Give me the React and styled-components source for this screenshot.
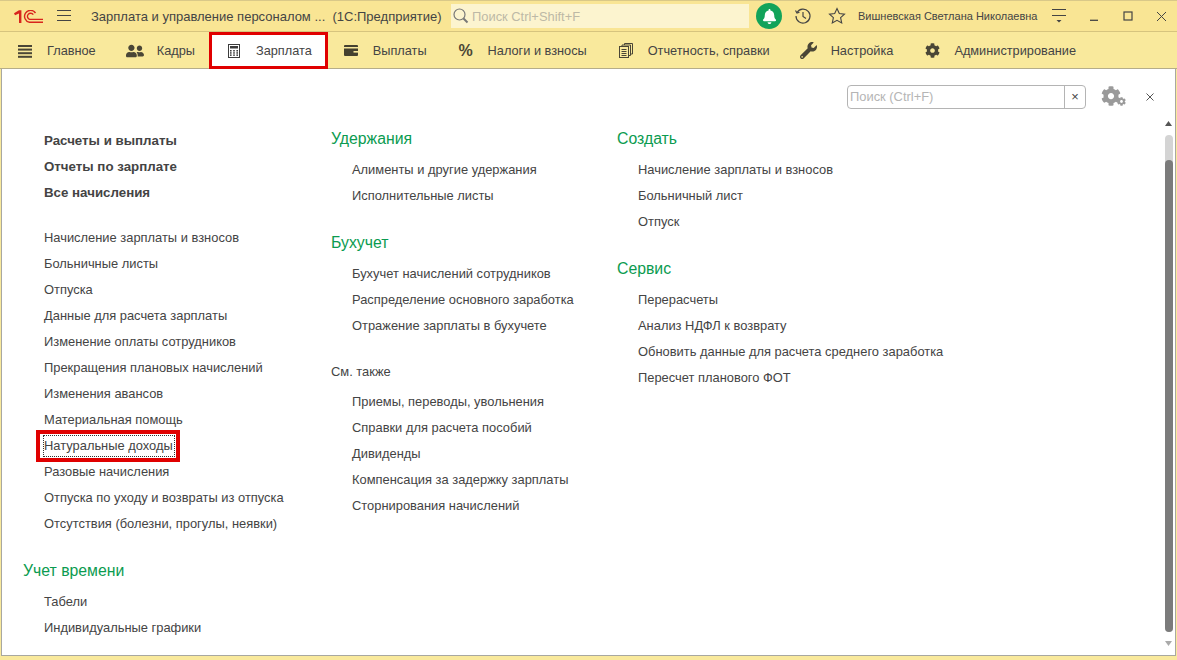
import React from "react";
import styled, { createGlobalStyle } from "styled-components";
import { FaUserFriends, FaWrench, FaCog, FaBell } from "react-icons/fa";

const tabs = [
  { label: "Главное", icon: <BurgerIcon /> },
  { label: "Кадры", icon: <FaUserFriends size={18} /> },
  { label: "Зарплата", icon: <CalcIcon />, active: true },
  { label: "Выплаты", icon: <CardIcon /> },
  { label: "Налоги и взносы", icon: <PercentIcon /> },
  { label: "Отчетность, справки", icon: <DocsIcon /> },
  { label: "Настройка", icon: <FaWrench size={17} /> },
  { label: "Администрирование", icon: <FaCog size={15} /> },
];

const mainLinks = [
  "Начисление зарплаты и взносов",
  "Больничные листы",
  "Отпуска",
  "Данные для расчета зарплаты",
  "Изменение оплаты сотрудников",
  "Прекращения плановых начислений",
  "Изменения авансов",
  "Материальная помощь",
  "Натуральные доходы",
  "Разовые начисления",
  "Отпуска по уходу и возвраты из отпуска",
  "Отсутствия (болезни, прогулы, неявки)",
];

function PercentIcon() {
  return <Percent>%</Percent>;
}

function BurgerIcon() {
  return (
    <svg width="14" height="14" viewBox="0 0 14 14" fill="#4a4636">
      <rect y="1" width="14" height="2" />
      <rect y="4.6" width="14" height="2" />
      <rect y="8.2" width="14" height="2" />
      <rect y="11.8" width="14" height="2" />
    </svg>
  );
}

function CalcIcon() {
  return (
    <svg width="12" height="14" viewBox="0 0 12 14">
      <rect x="0.5" y="0.5" width="11" height="13" fill="none" stroke="#3c3c3c" />
      <rect x="2" y="2" width="8" height="2.5" fill="#3c3c3c" />
      {[2, 5.2, 8.4].map(x =>
        [6, 8.2, 10.4].map(y => <rect key={`${x}-${y}`} x={x} y={y} width="1.6" height="1.5" fill="#3c3c3c" />)
      )}
    </svg>
  );
}

function CardIcon() {
  return (
    <svg width="14" height="11" viewBox="0 0 14 11" fill="#45412f">
      <path d="M1 0h12a1 1 0 0 1 1 1v1H0V1a1 1 0 0 1 1-1z" />
      <path d="M0 3.500h14V10a1 1 0 0 1-1 1H1a1 1 0 0 1-1-1z" />
      <rect x="9.500" y="6" width="4.500" height="1.600" fill="#f9e99c" />
    </svg>
  );
}

function DocsIcon() {
  return (
    <svg width="14" height="15" viewBox="0 0 14 15" fill="none" stroke="#4a4636">
      <rect x="0.5" y="3.5" width="9" height="11" />
      <path d="M3 3.500V2h8.500v10.500h-2M5.500 2V.500h8V11h-2" />
      <path d="M2.500 6.500h5M2.500 8.500h5M2.500 10.500h5M2.500 12.500h5" />
    </svg>
  );
}

const App = () => (
  <Window>
    <GlobalStyle />
    <TitleBar>
      <Logo viewBox="0 0 29 13" width="29" height="13">
        <path d="M0 3.200 5 .3h2.400V13H5V3.600L1 5.300z" fill="#d8251d" />
        <path d="M21.500 3A6 6 0 1 0 15.500 12.300H29M19.300 4.600A3.200 3.200 0 1 0 15.500 9.400H29" fill="none" stroke="#d8251d" strokeWidth="1.400" />
      </Logo>
      <MenuLines viewBox="0 0 14 12" width="14" height="12">
        <path d="M0 .5h14M0 5.500h14M0 10.500h14" stroke="#444" fill="none" />
      </MenuLines>
      <WindowTitle>Зарплата и управление персоналом ...&nbsp; (1С:Предприятие)</WindowTitle>
      <GlobalSearch>
        <svg width="16" height="16" viewBox="0 0 16 16" fill="none" stroke="#777" strokeWidth="1.200">
          <circle cx="6.500" cy="6.500" r="5.500" />
          <path d="M10.500 10.500l4 4" strokeWidth="2" />
        </svg>
        <span>Поиск Ctrl+Shift+F</span>
      </GlobalSearch>
      <BellCircle>
        <FaBell size={15} color="#fff" />
      </BellCircle>
      <HeaderIcon>
        <svg width="18" height="18" viewBox="0 0 18 18" fill="none" stroke="#444" strokeWidth="1.200">
          <path d="M3 5.500A7 7 0 1 1 2 9" />
          <path d="M1.500 3.500 3 6l2.500-.8" />
          <path d="M9 5v4.500l3 2" />
        </svg>
      </HeaderIcon>
      <HeaderIcon>
        <svg width="18" height="18" viewBox="0 0 18 18" fill="none" stroke="#444" strokeWidth="1.100">
          <path d="M9 1.500l2.300 5 5.200.6-3.900 3.600 1.100 5.300L9 13.300 4.300 16l1.100-5.300L1.500 7.100l5.200-.6z" />
        </svg>
      </HeaderIcon>
      <UserName>Вишневская Светлана Николаевна</UserName>
      <WindowControl $width={36}>
        <svg width="16" height="14" viewBox="0 0 16 14" fill="none" stroke="#444">
          <path d="M1 .5h14M1 6.500h14" />
          <path d="M5.500 11h5L8 13.500z" fill="#444" stroke="none" />
        </svg>
      </WindowControl>
      <WindowControl $width={34}>
        <svg width="10" height="10" viewBox="0 0 10 10" fill="none" stroke="#444" strokeWidth="1.300">
          <path d="M1 9.300h8" />
        </svg>
      </WindowControl>
      <WindowControl $width={34}>
        <svg width="10" height="10" viewBox="0 0 10 10" fill="none" stroke="#444" strokeWidth="1.200">
          <rect x="1" y="1" width="8" height="8" />
        </svg>
      </WindowControl>
      <WindowControl $width={32}>
        <svg width="11" height="11" viewBox="0 0 11 11" fill="none" stroke="#444">
          <path d="M1 1l9 9M10 1l-9 9" />
        </svg>
      </WindowControl>
    </TitleBar>

    <TabBar>
      {tabs.map(tab => (
        <Tab key={tab.label} $active={tab.active}>
          <TabIcon>{tab.icon}</TabIcon>
          {tab.label}
        </Tab>
      ))}
    </TabBar>

    <Panel>
      <Toolbar>
        <SearchField>
          <SearchInput>Поиск (Ctrl+F)</SearchInput>
          <SearchClear>×</SearchClear>
        </SearchField>
        <Gears>
          <FaCog size={20} color="#9a9a9a" />
          <SmallGear>
            <FaCog size={9} color="#9a9a9a" />
          </SmallGear>
        </Gears>
        <CloseButton>
          <svg width="8" height="8" viewBox="0 0 8 8" fill="none" stroke="#555">
            <path d="M.5.500l7 7M7.500.500l-7 7" />
          </svg>
        </CloseButton>
      </Toolbar>

      <Content>
        <FirstColumn>
          <Indent>
            <BoldLink>Расчеты и выплаты</BoldLink>
            <BoldLink>Отчеты по зарплате</BoldLink>
            <BoldLink>Все начисления</BoldLink>
            <LinkGroup>
              {mainLinks.map(link =>
                link === "Натуральные доходы" ? (
                  <Link key={link}>
                    <Focused>{link}</Focused>
                  </Link>
                ) : (
                  <Link key={link}>{link}</Link>
                )
              )}
            </LinkGroup>
          </Indent>
          <Heading $top={24}>Учет времени</Heading>
          <Indent>
            <Link>Табели</Link>
            <Link>Индивидуальные графики</Link>
          </Indent>
        </FirstColumn>

        <Column $width={286}>
          <Heading>Удержания</Heading>
          <Indent>
            <Link>Алименты и другие удержания</Link>
            <Link>Исполнительные листы</Link>
          </Indent>
          <Heading $top={24}>Бухучет</Heading>
          <Indent>
            <Link>Бухучет начислений сотрудников</Link>
            <Link>Распределение основного заработка</Link>
            <Link>Отражение зарплаты в бухучете</Link>
          </Indent>
          <SeeAlso>См. также</SeeAlso>
          <Indent>
            <Link>Приемы, переводы, увольнения</Link>
            <Link>Справки для расчета пособий</Link>
            <Link>Дивиденды</Link>
            <Link>Компенсация за задержку зарплаты</Link>
            <Link>Сторнирования начислений</Link>
          </Indent>
        </Column>

        <Column $width={400}>
          <Heading>Создать</Heading>
          <Indent>
            <Link>Начисление зарплаты и взносов</Link>
            <Link>Больничный лист</Link>
            <Link>Отпуск</Link>
          </Indent>
          <Heading $top={24}>Сервис</Heading>
          <Indent>
            <Link>Перерасчеты</Link>
            <Link>Анализ НДФЛ к возврату</Link>
            <Link>Обновить данные для расчета среднего заработка</Link>
            <Link>Пересчет планового ФОТ</Link>
          </Indent>
        </Column>
      </Content>

      <ScrollBar>
        <ScrollArrow viewBox="0 0 7 5" width="7" height="5">
          <path d="M3.500 0 7 5H0z" fill="#555" />
        </ScrollArrow>
        <ScrollTrack>
          <ScrollThumb />
        </ScrollTrack>
        <ScrollArrow viewBox="0 0 7 5" width="7" height="5">
          <path d="M0 0h7L3.500 5z" fill="#aaa" />
        </ScrollArrow>
      </ScrollBar>
    </Panel>
  </Window>
);

export default App;

const GlobalStyle = createGlobalStyle`
  html, body {
    margin: 0;
    padding: 0;
    background: #f9e99c;
  }
  * {
    box-sizing: border-box;
  }
`;

const Window = styled.div`
  width: 1177px;
  height: 660px;
  display: flex;
  flex-direction: column;
  overflow: hidden;
  background: #f9e99c;
  font-family: "Liberation Sans", Arial, sans-serif;
  font-size: 12.9px;
  color: #444;
`;

const TitleBar = styled.div`
  height: 32px;
  flex: none;
  display: flex;
  align-items: center;
  padding-left: 14px;
  background: #f9e594;
  border-top: 1px solid #d9c888;
  border-bottom: 1px solid #d6c47e;
`;

const Logo = styled.svg`
  flex: none;
`;

const MenuLines = styled.svg`
  flex: none;
  margin-left: 14px;
`;

const WindowTitle = styled.div`
  margin-left: 20px;
  width: 360px;
  white-space: nowrap;
  font-size: 13px;
`;

const GlobalSearch = styled.div`
  width: 298px;
  height: 24px;
  display: flex;
  align-items: center;
  gap: 3px;
  padding-left: 2px;
  background: #fcf4cf;
  color: #bdb9a6;
  font-size: 12.9px;
`;

const BellCircle = styled.div`
  width: 26px;
  height: 26px;
  margin: 0 4px 0 7px;
  border-radius: 50%;
  background: #12a35a;
  display: flex;
  align-items: center;
  justify-content: center;
`;

const HeaderIcon = styled.div`
  width: 34px;
  display: flex;
  justify-content: center;
`;

const UserName = styled.div`
  margin-left: 4px;
  width: 183px;
  white-space: nowrap;
  font-size: 11px;
`;

const WindowControl = styled.div`
  width: ${p => p.$width}px;
  display: flex;
  justify-content: center;
`;

const TabBar = styled.div`
  height: 37px;
  flex: none;
  display: flex;
  padding-left: 1px;
  background: #f9e99c;
  border-bottom: 1px solid #b5ad8a;
`;

const Tab = styled.div`
  position: relative;
  height: 37px;
  display: flex;
  align-items: center;
  padding: 0 15px 0 14px;
  white-space: nowrap;
  font-size: 12.75px;
  ${p =>
    p.$active &&
    `
    background: #fff;
    &::after {
      content: "";
      position: absolute;
      inset: 0 -1px 0 -1px;
      border: 3px solid #e00000;
    }
  `}
`;

const TabIcon = styled.span`
  width: 20px;
  margin-right: 12px;
  display: flex;
  justify-content: center;
  color: #4a4636;
`;

const Percent = styled.span`
  font-size: 16px;
  font-weight: bold;
`;

const Panel = styled.div`
  position: relative;
  flex: none;
  height: 587px;
  margin: 0 1px;
  background: #fff;
  border: 1px solid #a8a8a0;
  border-top: none;
`;

const Toolbar = styled.div`
  height: 52px;
  display: flex;
  align-items: center;
  justify-content: flex-end;
  padding: 4px 21px 0 0;
`;

const SearchField = styled.div`
  width: 239px;
  height: 24px;
  display: flex;
  border: 1px solid #b4b4b4;
  border-radius: 4px;
`;

const SearchInput = styled.div`
  flex: 1;
  padding-left: 2px;
  line-height: 22px;
  color: #b5b5b5;
  border-right: 1px solid #b4b4b4;
  font-size: 12.9px;
`;

const SearchClear = styled.div`
  width: 20px;
  text-align: center;
  line-height: 21px;
  color: #444;
`;

const Gears = styled.div`
  position: relative;
  width: 25px;
  height: 23px;
  margin-left: 15px;
`;

const SmallGear = styled.span`
  position: absolute;
  right: 0;
  bottom: 0;
`;

const CloseButton = styled.div`
  width: 8px;
  display: flex;
  margin-left: 20px;
`;

const Content = styled.div`
  display: flex;
  padding: 7px 0 0 21px;
`;

const Column = styled.div`
  width: ${p => p.$width}px;
  padding-top: 1px;
`;

const FirstColumn = styled.div`
  width: 308px;
`;

const Indent = styled.div`
  padding-left: 21px;
`;

const Heading = styled.div`
  font-size: 15.8px;
  line-height: 20px;
  color: #0b9b50;
  margin-top: ${p => p.$top || 0}px;
  margin-bottom: 8px;
`;

const BoldLink = styled.div`
  font-weight: bold;
  font-size: 13.3px;
  line-height: 26px;
  height: 26px;
`;

const LinkGroup = styled.div`
  margin-top: 19px;
`;

const Link = styled.div`
  line-height: 26px;
  height: 26px;
  white-space: nowrap;
`;

const Focused = styled.span`
  position: relative;
  display: inline-block;
  margin-left: -1px;
  padding: 0 2px 0 1px;
  height: 22px;
  line-height: 22px;
  vertical-align: top;
  margin-top: 2px;
  outline: 1px dotted #333;
  outline-offset: -1px;
  &::after {
    content: "";
    position: absolute;
    inset: -5px -5px -5px -7px;
    border: 4px solid #e00000;
  }
`;

const SeeAlso = styled.div`
  line-height: 20px;
  margin: 23px 0 7px;
`;

const ScrollBar = styled.div`
  position: absolute;
  top: 48px;
  right: 2px;
  bottom: 9px;
  width: 9px;
  padding-top: 4px;
  display: flex;
  flex-direction: column;
  align-items: center;
  gap: 9px;
`;

const ScrollArrow = styled.svg`
  flex: none;
`;

const ScrollTrack = styled.div`
  flex: 1;
  width: 8px;
  padding-top: 25px;
  border-radius: 4px;
  background: #d4d4d4;
  display: flex;
`;

const ScrollThumb = styled.div`
  flex: 1;
  border-radius: 4px;
  background: #7b7b7b;
`;
